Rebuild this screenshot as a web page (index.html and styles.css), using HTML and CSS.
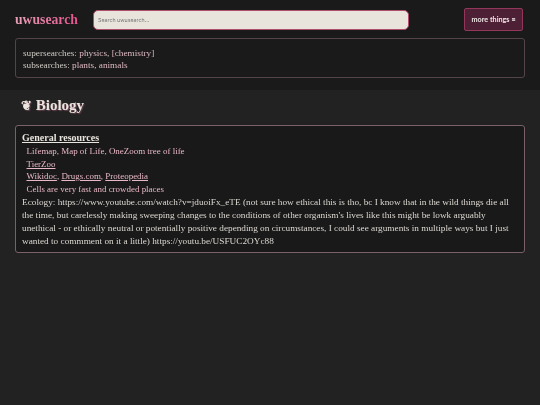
FILE: index.html
```html
<!DOCTYPE html>
<html lang="en">
<head>
<meta charset="utf-8">
<title>uwusearch - Biology</title>
<link rel="stylesheet" href="styles.css">
</head>
<body>
<header class="top">
  <div class="bar">
    <a class="logo">uwusearch</a>
    <input class="search" type="text" placeholder="Search uwusearch...">
    <button class="more">more things ≡</button>
  </div>
  <div class="related">
    <div>supersearches: <a>physics</a>, <a>[chemistry]</a></div>
    <div>subsearches: <a>plants</a>, <a>animals</a></div>
  </div>
</header>
<main class="content">
  <h1 class="title"><span class="glyph">❦</span> Biology</h1>
  <section class="card">
    <div class="head">General resources</div>
    <div class="item">Lifemap, Map of Life, OneZoom tree of life</div>
    <div class="item"><u>TierZoo</u></div>
    <div class="item"><u>Wikidoc</u>, <u>Drugs.com</u>, <u>Proteopedia</u></div>
    <div class="item">Cells are very fast and crowded places</div>
    <div class="body">Ecology: https://www.youtube.com/watch?v=jduoiFx_eTE (not sure how ethical this is tho, bc I know that in the wild things die all the time, but carelessly making sweeping changes to the conditions of other organism's lives like this might be lowk arguably unethical - or ethically neutral or potentially positive depending on circumstances, I could see arguments in multiple ways but I just wanted to commment on it a little) https://youtu.be/USFUC2OYc88</div>
  </section>
</main>
</body>
</html>
```
FILE: styles.css
```css
html, body { margin: 0; padding: 0; height: 100%; }
body {
  background: #222222;
  color: #dcd8d2;
  font-family: "Liberation Serif", "DejaVu Serif", serif;
  font-size: 9.25px;
  line-height: 12.75px;
}
.top {
  background: #1a1a1a;
  padding: 8px 15px 12px;
  filter: blur(0.3px);
}
.bar {
  display: flex;
  align-items: center;
  height: 23px;
}
.logo {
  width: 78px;
  font-weight: 700;
  font-size: 13.7px;
  line-height: 20px;
  background: linear-gradient(90deg, #e8a0b8, #e63f82);
  -webkit-background-clip: text;
  background-clip: text;
  color: transparent;
}
.search {
  box-sizing: border-box;
  width: 316px;
  height: 20px;
  padding: 0 4px;
  border: 1px solid #b04c6c;
  border-radius: 5px;
  background: #e8e4dc;
  font-family: "Inter", sans-serif;
  font-size: 5.3px;
  outline: none;
}
.search::placeholder { color: #777; }
.more {
  box-sizing: border-box;
  margin-left: auto;
  margin-right: 2px;
  width: 59px;
  height: 23px;
  padding: 0;
  border: 1px solid #93375a;
  border-radius: 2px;
  background: #4d2035;
  color: #efe6e6;
  font-family: "Lato", sans-serif;
  font-weight: 700;
  font-size: 7.2px;
}
.related {
  box-sizing: border-box;
  margin-top: 7px;
  height: 40px;
  padding: 7.5px 7px;
  border: 1px solid #54434a;
  border-radius: 3px;
  color: #cdc9c3;
}
.related a { color: #dcb8c2; }
.content {
  padding: 0 15px;
  filter: blur(0.3px);
}
.title {
  margin: 0;
  padding: 0 6px;
  height: 35px;
  font-size: 15px;
  line-height: 31px;
  font-weight: 700;
  color: #ebe5df;
  text-shadow: 1px 1px 1px #6a4050;
}
.glyph { font-size: 13px; }
.card {
  box-sizing: border-box;
  height: 128px;
  padding: 6px 6px;
  background: #191919;
  border: 1px solid #7a6068;
  border-radius: 3px;
}
.head { font-weight: 700; font-size: 10px; text-decoration: underline; color: #e8e4de; }
.item { padding-left: 4.5px; font-size: 8.95px; color: #e8b8c6; }
.body { color: #dcd8d2; padding-top: 0.5px; }
```
